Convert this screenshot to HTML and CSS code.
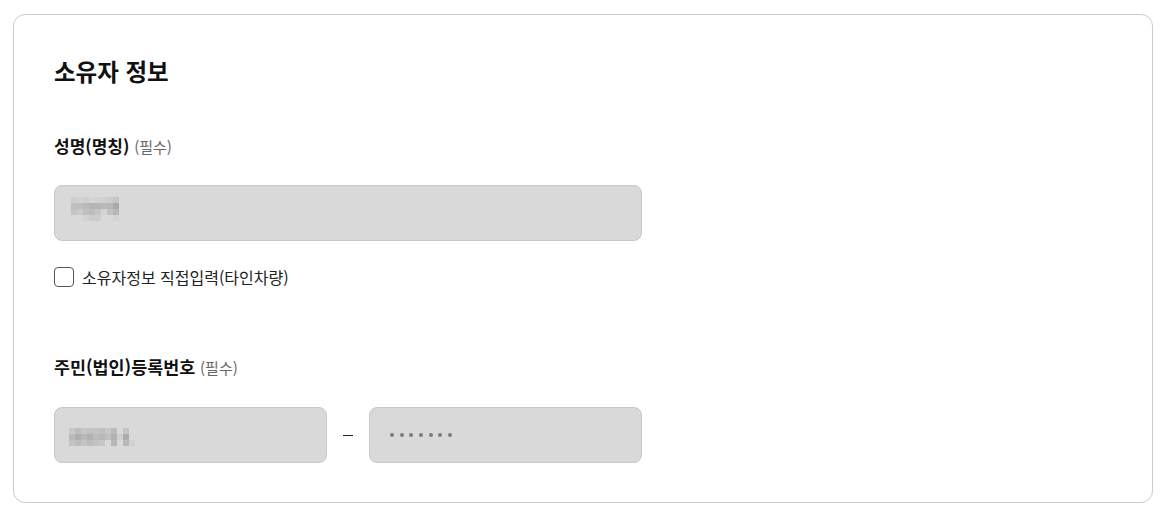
FILE: index.html
```html
<!DOCTYPE html>
<html lang="ko">
<head>
    <meta charset="UTF-8">
    <title>소유자 정보</title>
    <link rel="stylesheet" href="styles.css">
</head>
<body>
    <div class="card">
        <h2 class="title">소유자 정보</h2>

        <div class="field">
            <div class="label">성명(명칭) <span class="req">(필수)</span></div>
            <div class="input wide">
                <svg class="mosaic" width="48" height="36" viewBox="0 0 8 6">
                    <rect x="0" y="0" width="1" height="1" fill="#cdcdcd"/>
                    <rect x="1" y="0" width="1" height="1" fill="#d3d3d3"/>
                    <rect x="2" y="0" width="1" height="1" fill="#cfcfcf"/>
                    <rect x="3" y="0" width="1" height="1" fill="#d4d4d4"/>
                    <rect x="4" y="0" width="1" height="1" fill="#d2d2d4"/>
                    <rect x="5" y="0" width="1" height="1" fill="#d0d0d0"/>
                    <rect x="6" y="0" width="1" height="1" fill="#cccccc"/>
                    <rect x="7" y="0" width="1" height="1" fill="#c6c6c6"/>
                    <rect x="0" y="1" width="1" height="1" fill="#bfbfbf"/>
                    <rect x="1" y="1" width="1" height="1" fill="#bdbdbd"/>
                    <rect x="2" y="1" width="1" height="1" fill="#bababa"/>
                    <rect x="3" y="1" width="1" height="1" fill="#b4b4b4"/>
                    <rect x="4" y="1" width="1" height="1" fill="#b6b6b6"/>
                    <rect x="5" y="1" width="1" height="1" fill="#bababa"/>
                    <rect x="6" y="1" width="1" height="1" fill="#b8b8b8"/>
                    <rect x="7" y="1" width="1" height="1" fill="#a9a9a9"/>
                    <rect x="0" y="2" width="1" height="1" fill="#c4c4c4"/>
                    <rect x="1" y="2" width="1" height="1" fill="#cacaca"/>
                    <rect x="2" y="2" width="1" height="1" fill="#c0c0c0"/>
                    <rect x="3" y="2" width="1" height="1" fill="#bdbdbd"/>
                    <rect x="4" y="2" width="1" height="1" fill="#c6c6c6"/>
                    <rect x="5" y="2" width="1" height="1" fill="#d4d4d4"/>
                    <rect x="6" y="2" width="1" height="1" fill="#c2c2c2"/>
                    <rect x="7" y="2" width="1" height="1" fill="#b7b7b7"/>
                    <rect x="2" y="3" width="1" height="1" fill="#d2d2d2"/>
                    <rect x="3" y="3" width="1" height="1" fill="#cbcbcb"/>
                    <rect x="4" y="3" width="1" height="1" fill="#cdcdcd"/>
                    <rect x="7" y="3" width="1" height="1" fill="#d3d3d3"/>
                </svg>
            </div>
        </div>

        <label class="check">
            <span class="box"></span>
            소유자정보 직접입력(타인차량)
        </label>

        <div class="field second">
            <div class="label">주민(법인)등록번호 <span class="req">(필수)</span></div>
            <div class="row">
                <div class="input half">
                    <svg class="mosaic small" width="72" height="21" viewBox="0 0 12 3.5">
                        <rect x="0" y="0" width="1" height="1" fill="#c8c8c8"/>
                        <rect x="1" y="0" width="1" height="1" fill="#bdbdbd"/>
                        <rect x="2" y="0" width="1" height="1" fill="#c6c6c6"/>
                        <rect x="3" y="0" width="1" height="1" fill="#c2c2c4"/>
                        <rect x="4" y="0" width="1" height="1" fill="#c4c4c4"/>
                        <rect x="5" y="0" width="1" height="1" fill="#c0c0c2"/>
                        <rect x="6" y="0" width="1" height="1" fill="#c7c7c7"/>
                        <rect x="7" y="0" width="1" height="1" fill="#bababa"/>
                        <rect x="9" y="0" width="1" height="1" fill="#c4c4c4"/>
                        <rect x="0" y="1" width="1" height="1" fill="#bbbbbb"/>
                        <rect x="1" y="1" width="1" height="1" fill="#aeaeae"/>
                        <rect x="2" y="1" width="1" height="1" fill="#b9b9b9"/>
                        <rect x="3" y="1" width="1" height="1" fill="#b2b2b2"/>
                        <rect x="4" y="1" width="1" height="1" fill="#bcbcbc"/>
                        <rect x="5" y="1" width="1" height="1" fill="#b8b8b8"/>
                        <rect x="6" y="1" width="1" height="1" fill="#bfc1c4"/>
                        <rect x="7" y="1" width="1" height="1" fill="#b3b3b3"/>
                        <rect x="8" y="1" width="1" height="1" fill="#cfcfcf"/>
                        <rect x="9" y="1" width="1" height="1" fill="#ababab"/>
                        <rect x="0" y="2" width="1" height="1" fill="#c4c4c4"/>
                        <rect x="1" y="2" width="1" height="1" fill="#bcbcbc"/>
                        <rect x="2" y="2" width="1" height="1" fill="#c3c3c3"/>
                        <rect x="3" y="2" width="1" height="1" fill="#bdbdbd"/>
                        <rect x="4" y="2" width="1" height="1" fill="#c2c2c2"/>
                        <rect x="5" y="2" width="1" height="1" fill="#c6c6c6"/>
                        <rect x="7" y="2" width="1" height="1" fill="#b8b8b8"/>
                        <rect x="9" y="2" width="1" height="1" fill="#b9b9b9"/>
                        <rect x="10" y="2" width="1" height="1" fill="#d0d0d0"/>
                    </svg>
                </div>
                <span class="dash"></span>
                <div class="input half">
                    <div class="dots">
                        <i></i><i></i><i></i><i></i><i></i><i></i><i></i>
                    </div>
                </div>
            </div>
        </div>
    </div>
</body>
</html>
```

FILE: styles.css
```css
body {
    margin: 0;
    background: #fff;
    font-family: "Noto Sans CJK KR", "Noto Sans", sans-serif;
    color: #111;
}

.card {
    box-sizing: border-box;
    width: 1140px;
    height: 489px;
    margin: 14px 0 0 13px;
    padding: 40px 40px 0 40px;
    border: 1px solid #cbcbcb;
    border-radius: 12px;
}

.title {
    margin: 0;
    font-size: 23.5px;
    font-weight: 700;
    line-height: 32px;
}

.field {
    margin-top: 47px;
}

.field.second {
    margin-top: 67px;
}

.label {
    font-size: 17px;
    font-weight: 700;
    line-height: 24px;
}

.second .label {
    font-size: 17.4px;
}

.req {
    font-size: 15px;
    font-weight: 400;
    color: #666;
}

.input {
    box-sizing: border-box;
    height: 56px;
    background: #d9d9d9;
    border: 1px solid #c8c8c8;
    border-radius: 8px;
    display: flex;
    align-items: center;
    padding-left: 16px;
}

.wide {
    width: 588px;
    margin-top: 26px;
}

.mosaic {
    display: block;
    margin-top: 4px;
}

.mosaic.small {
    margin-top: 6px;
    margin-left: -2px;
}

.row {
    display: flex;
    align-items: center;
    margin-top: 27px;
}

.half {
    width: 273px;
}

.dash {
    width: 10px;
    height: 1px;
    background: #222;
    margin: 0 16px 0 16px;
}

.dots {
    display: flex;
    gap: 5.7px;
    padding-left: 4px;
}

.dots i {
    width: 4px;
    height: 4px;
    border-radius: 50%;
    background: #7a7a7a;
}

.check {
    display: flex;
    align-items: center;
    gap: 8px;
    margin-top: 25px;
    font-size: 16px;
    line-height: 22px;
    color: #222;
}

.box {
    box-sizing: border-box;
    width: 20px;
    height: 20px;
    border: 1.5px solid #555;
    border-radius: 4px;
    background: #fff;
}
```
